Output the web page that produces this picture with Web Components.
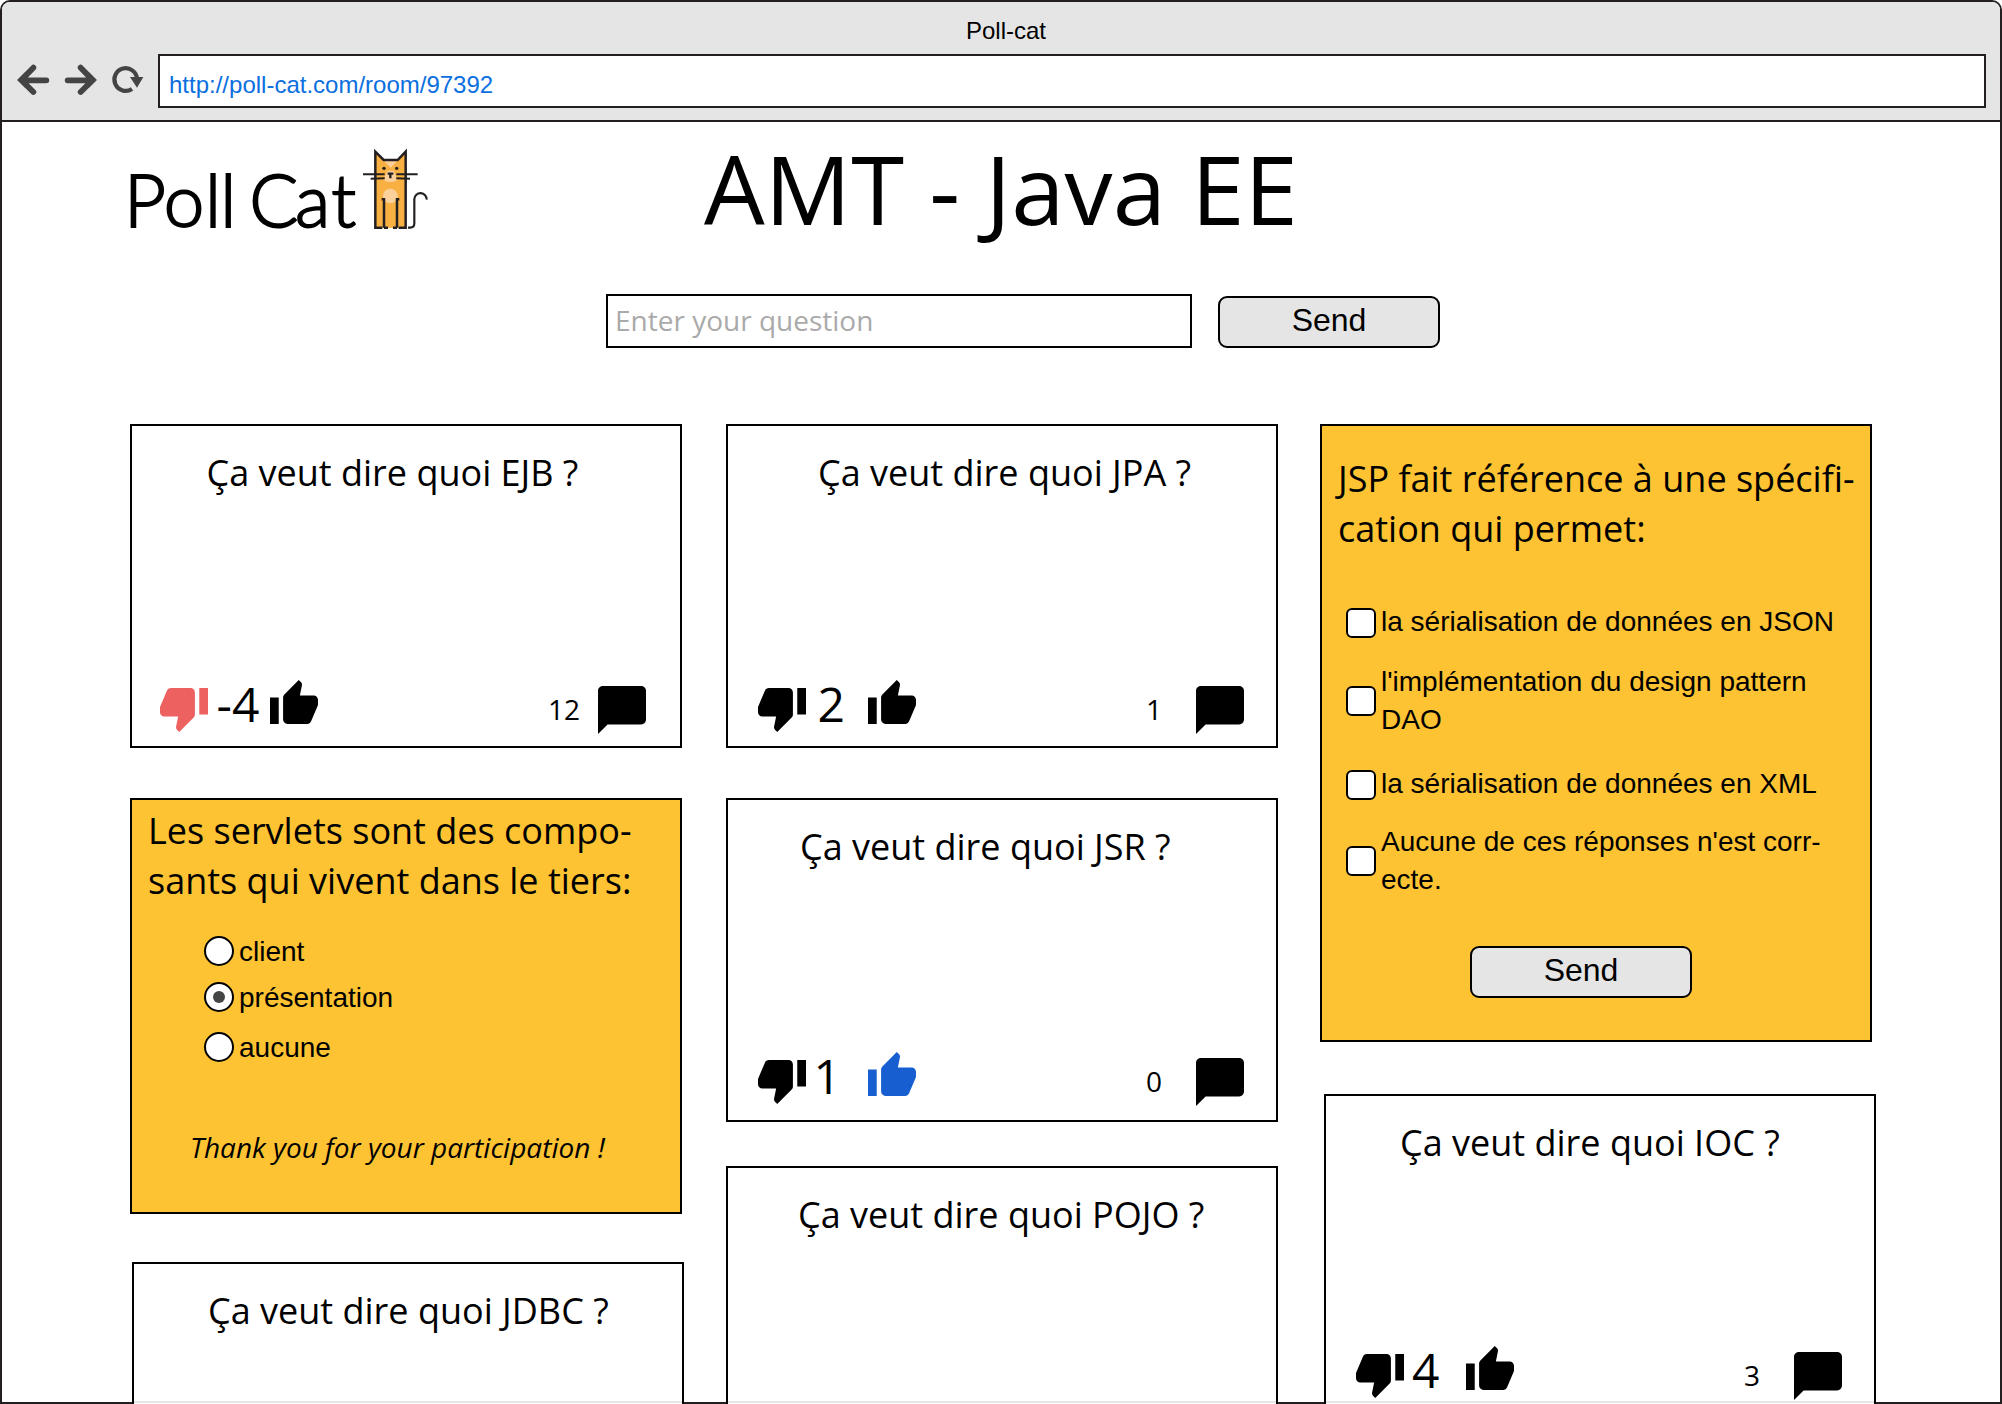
<!DOCTYPE html>
<html lang="fr">
<head>
<meta charset="utf-8">
<title>Poll-cat</title>
<style>
html,body{margin:0;padding:0;background:#fff}
body{width:2002px;height:1404px;overflow:hidden;font-family:"Open Sans","Noto Sans",sans-serif;color:#000}
</style>
</head>
<body>
<browser-window heading="Poll-cat" url="http://poll-cat.com/room/97392">
  <room-header heading="AMT - Java EE"></room-header>
  <question-form></question-form>
  <card-board>
    <card-column>
      <question-card style="--title-x:76.5px;--foot-x:30px;--num-x:8.5px;--cnt-gap:18px" score="-4" comments="12" vote="down">Ça veut dire quoi EJB ?</question-card>
      <poll-card style="--h:416px;--top:6px;margin-top:50px">
        <span slot="title">Les servlets sont des compo-<br>sants qui vivent dans le tiers:</span>
        <poll-option kind="radio" style="--lift:1px;margin:30px 0 0 56px">client</poll-option>
        <poll-option kind="radio" checked style="--lift:1px;margin:16px 0 0 56px">présentation</poll-option>
        <poll-option kind="radio" style="--lift:1px;margin:20px 0 0 56px">aucune</poll-option>
        <thank-note>Thank you for your participation !</thank-note>
      </poll-card>
      <question-card style="--title-x:76px;--fold:137px;--h:142px;margin:48px 0 0 2px">Ça veut dire quoi JDBC ?</question-card>
    </card-column>
    <card-column style="margin-left:44px">
      <question-card style="--title-x:92px;--num-x:11.5px" score="2" comments="1">Ça veut dire quoi JPA ?</question-card>
      <question-card style="--title-x:74px;--dy:-2px;--num-x:7.5px;margin-top:50px" score="1" comments="0" vote="up">Ça veut dire quoi JSR ?</question-card>
      <question-card style="--title-x:72px;--fold:233px;--h:238px;margin-top:44px">Ça veut dire quoi POJO ?</question-card>
    </card-column>
    <card-column style="margin-left:42px">
      <poll-card style="--h:618px;--top:28px">
        <span slot="title">JSP fait référence à une spécifi-<br>cation qui permet:</span>
        <poll-option kind="check" style="--lift:-2px;margin:54px 0 0 8px">la sérialisation de données en JSON</poll-option>
        <poll-option kind="check" style="margin:48px 0 0 8px">l'implémentation du design pattern<br>DAO</poll-option>
        <poll-option kind="check" style="--lift:-2px;margin:54px 0 0 8px">la sérialisation de données en XML</poll-option>
        <poll-option kind="check" style="margin:46px 0 0 8px">Aucune de ces réponses n'est corr-<br>ecte.</poll-option>
        <send-button style="margin:70px 0 0 132px">Send</send-button>
      </poll-card>
      <question-card style="--title-x:76px;--dy:-4px;--num-x:8px;--fold:305px;--h:310px;margin:52px 0 0 4px" score="4" comments="3">Ça veut dire quoi IOC ?</question-card>
    </card-column>
  </card-board>
</browser-window>

<script>
const define = (name, render) => customElements.define(name, class extends HTMLElement {
  connectedCallback() {
    if (this.shadowRoot) return;
    this.attachShadow({mode: 'open'}).innerHTML = render(this);
  }
});

define('browser-window', el => `
<style>
:host{display:flex;flex-direction:column;box-sizing:border-box;width:2002px;height:1404px;border:2px solid #231f20;border-radius:10px 10px 0 0;background:#fff}
header{height:118px;background:#e5e5e5;border-bottom:2px solid #231f20;border-radius:8px 8px 0 0;font:24px/28px "Liberation Sans",Arial,sans-serif;flex:none}
.t{padding:15px 0 0 10px;text-align:center;height:37px}
.b{display:flex}
svg{flex:none;width:156px;height:54px}
.u{box-sizing:border-box;width:1828px;height:54px;border:2px solid #231f20;background:#fff;color:#0b6fe0;padding:15px 0 0 9px;line-height:28px}
</style>
<header>
 <div class="t">${el.getAttribute('heading')}</div>
 <div class="b">
  <svg viewBox="6 162 468 162" fill="none" stroke="#444">
   <g stroke-width="17.5" stroke-linecap="round"><path d="M139 241H72M100 203L64 240L100 276"/><path d="M203 241H270M242 203L278 240L242 276"/></g>
   <path d="M52 240L76 216V264ZM290 240L266 216V264Z" fill="#444" stroke="none"/>
   <path d="M396 267A34 34 0 1 1 411 236" stroke-width="12.5"/>
   <path d="M390 231H430L411 263Z" fill="#444" stroke="none"/>
  </svg>
  <div class="u">${el.getAttribute('url')}</div>
 </div>
</header>
<slot></slot>`);

define('poll-cat-logo', () => `
<style>:host{display:block}svg{display:block;width:340px;height:120px}</style>
<svg viewBox="0 0 1020 360">
 <text y="291" font-family="Lato" font-weight="300" font-size="218" fill="#000" stroke="#000" stroke-width="5.5"><tspan x="42 161 285 331">Poll</tspan><tspan> </tspan><tspan x="418 555 664">Cat</tspan></text>
 <path d="M796 64L822 90H862L887 64V293H796Z" fill="#f9b042"/>
 <path d="M822 92H862L842 113Z" fill="#fbd09b"/>
 <path d="M824 141L832 122H851L859 141V152Q842 160 824 152Z" fill="#fbd09b"/>
 <path d="M822 208H861V293H822Z" fill="#f9b042"/>
 <circle cx="841" cy="198" r="22" fill="#fbd09b"/>
 <g fill="none" stroke="#231f20" stroke-width="7.5">
  <path d="M817 293H796V65L821 90H863L887 65V293H866"/>
  <path d="M815 208H822V293M868 208H861V293M822 293H834M861 293H849"/>
  <path d="M759 133H824M859 133H923M782 146L824 145M859 145L900 146" stroke-width="6"/>
  <path d="M894 293H901Q913 293 913 280V207A18.5 18.5 0 0 1 950 209" stroke-width="6.5"/>
  <path d="M833 131H850M841 131V145" stroke-width="7"/>
 </g>
 <circle cx="822" cy="115" r="5" fill="#231f20"/><circle cx="860" cy="115" r="5" fill="#231f20"/>
</svg>`);

define('room-header', el => `
<style>
:host{display:flex;height:170px;padding-left:108px;flex:none}
poll-cat-logo{margin-top:8px}
h1{margin:1px 0 0 254px;font-weight:400;font-size:96px;line-height:130px;letter-spacing:.1px;white-space:nowrap}
</style>
<poll-cat-logo></poll-cat-logo><h1>${el.getAttribute('heading')}</h1>`);

define('send-button', () => `
<style>
:host{display:block;box-sizing:border-box;width:222px;height:52px;border:2px solid #000;border-radius:9px;background:#e5e5e5;font:32px/44px "Liberation Sans",Arial,sans-serif;text-align:center;flex:none}
</style><slot></slot>`);

define('question-form', () => `
<style>
:host{display:flex;box-sizing:border-box;padding-left:604px;height:132px;flex:none}
.i{box-sizing:border-box;width:586px;height:54px;margin-top:2px;border:2px solid #000;color:#aaa;font-size:28px;line-height:48px;padding-left:7px}
send-button{margin:4px 0 0 26px}
</style>
<div class="i">Enter your question</div><send-button>Send</send-button>`);

define('card-board', () => `<style>:host{display:flex;align-items:flex-start;padding-left:128px;flex:none;height:980px}</style><slot></slot>`);
define('card-column', () => `<style>:host{display:flex;flex-direction:column;width:552px;flex:none}</style><slot></slot>`);

const UP = 'M1 21h4V9H1v12zm22-11c0-1.1-.9-2-2-2h-6.31l.95-4.57.03-.32c0-.41-.17-.79-.44-1.06L14.17 1 7.59 7.59C7.22 7.95 7 8.45 7 9v10c0 1.1.9 2 2 2h9c.83 0 1.54-.5 1.84-1.22l3.02-7.05c.09-.23.14-.47.14-.73v-2z';
const DOWN = 'M15 3H6c-.83 0-1.54.5-1.84 1.22l-3.02 7.05c-.09.23-.14.47-.14.73v2c0 1.1.9 2 2 2h6.31l-.95 4.57-.03.32c0 .41.17.79.44 1.06L9.83 23l6.59-6.59c.36-.36.58-.86.58-1.41V5c0-1.1-.9-2-2-2zm4 0v12h4V3h-4z';

define('question-card', el => {
  const vote = el.getAttribute('vote');
  const footer = el.hasAttribute('score') ? `
<div class="f">
 <svg class="d" viewBox="1 3 22 20" preserveAspectRatio="none" fill="${vote === 'down' ? '#ed6161' : '#000'}"><path d="${DOWN}"/></svg>
 <span class="n">${el.getAttribute('score')}</span>
 <svg viewBox="1 1 22 20" preserveAspectRatio="none" fill="${vote === 'up' ? '#175fd0' : '#000'}"><path d="${UP}"/></svg>
 <span class="c">${el.getAttribute('comments')}</span>
 <svg class="m" viewBox="2 2 20 20"><path d="M20 2H4c-1.1 0-1.99.9-1.99 2L2 22l4-4h14c1.1 0 2-.9 2-2V4c0-1.1-.9-2-2-2z"/></svg>
</div>` : '';
  return `
<style>
:host{display:block;box-sizing:border-box;width:552px;height:var(--h,324px);flex:none;border:2px solid #000;background:linear-gradient(#e5e5e5,#e5e5e5) 0 var(--fold,-9px)/100% 2px no-repeat #fff}
:host([style*="--fold"]){border-bottom:none}
.t{padding:22px 0 0 calc(var(--title-x) - 2px);font-size:36px;line-height:50px;white-space:nowrap}
.f{display:flex;align-items:flex-start;height:53px;margin-top:calc(182px + var(--dy,0px));padding-left:calc(var(--foot-x,32px) - 2px)}
svg{display:block;flex:none;width:48px;height:44px}
.d{margin-top:8px}
.n{box-sizing:border-box;width:62px;padding-left:var(--num-x,7.5px);font-size:48px;line-height:48px;white-space:nowrap}
.c{width:280px;box-sizing:border-box;padding-right:var(--cnt-gap,34px);text-align:right;font-size:28px;line-height:48px;margin-top:5px}
.m{width:48px;height:48px;margin-top:6px}
</style>
<div class="t"><slot></slot></div>${footer}`;
});

define('poll-card', () => `
<style>
:host{display:flex;flex-direction:column;box-sizing:border-box;width:552px;height:var(--h);flex:none;border:2px solid #000;background:#fdc332;padding:var(--top) 0 0 16px}
.t{font-size:36px;line-height:50px;white-space:nowrap}
</style>
<div class="t"><slot name="title"></slot></div><slot></slot>`);

define('poll-option', el => {
  const radio = el.getAttribute('kind') === 'radio';
  return `
<style>
:host{display:flex;align-items:center;height:30px;flex:none;font:28px/38px "Liberation Sans",Arial,sans-serif;white-space:nowrap}
i{display:flex;align-items:center;justify-content:center;box-sizing:border-box;width:30px;height:30px;flex:none;border:2px solid #000;background:#fff;border-radius:${radio ? '50%' : '6px'}}
b{width:12px;height:12px;border-radius:50%;background:#444}
span{padding-left:5px;margin-top:var(--lift,0px)}
</style>
<i>${el.hasAttribute('checked') ? '<b></b>' : ''}</i><span><slot></slot></span>`;
});

define('thank-note', () => `<style>:host{display:block;margin:66px 0 0 42px;font-size:28px;font-style:italic;line-height:38px;white-space:nowrap}</style><slot></slot>`);
</script>
</body>
</html>
